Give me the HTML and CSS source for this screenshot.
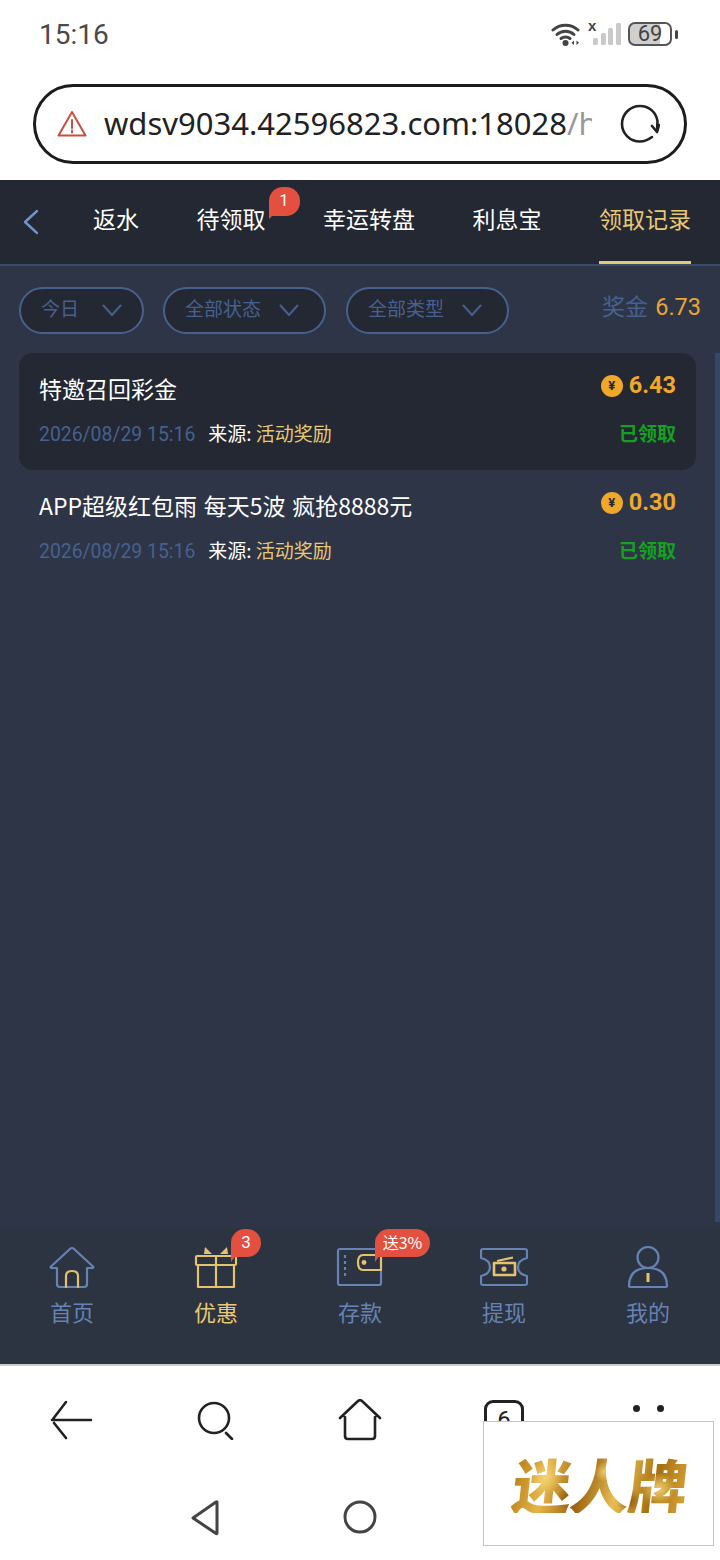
FILE: index.html
```html
<!DOCTYPE html>
<html lang="zh">
<head>
    <meta charset="UTF-8">
    <meta name="viewport" content="width=device-width, initial-scale=1.0">
    <title>领取记录</title>
    <link rel="stylesheet" href="styles.css">
</head>
<body>
    <div class="phone">
        <!-- Status bar -->
        <div class="status-bar">
            <span class="clock">15:16</span>
            <div class="status-icons">
                <svg width="30" height="23" viewBox="0 0 30 23" fill="none" stroke="#444" stroke-width="3" stroke-linecap="round">
                    <path d="M2 7C9 0.500 20 0.500 27 7"/>
                    <path d="M6 11.500C11 7 18 7 23 11.500"/>
                    <path d="M10 15.500C12.500 13.500 16.500 13.500 19 15.500"/>
                    <circle cx="14.500" cy="20" r="3" fill="#444" stroke="none"/>
                    <path d="M23 17.500V22L20.500 19.800ZM25.500 17.500V22L28 19.800Z" fill="#444" stroke="none"/>
                </svg>
                <div class="signal">
                    <span class="signal-x">x</span>
                    <svg width="28" height="22" viewBox="0 0 28 22" fill="#c9c9c9">
                        <rect x="0" y="15" width="5" height="7" rx="1.500"/>
                        <rect x="8" y="10" width="5" height="12" rx="1.500"/>
                        <rect x="15" y="5" width="5" height="17" rx="1.500"/>
                        <rect x="23" y="0" width="5" height="22" rx="1.500"/>
                    </svg>
                </div>
                <div class="battery">
                    <div class="battery-body"><span>69</span></div>
                    <div class="battery-cap"></div>
                </div>
            </div>
        </div>

        <!-- Browser address bar -->
        <div class="url-wrap">
            <div class="url-bar">
                <svg class="url-warn" width="30" height="28" viewBox="0 0 30 28" fill="none" stroke="#c9503f" stroke-width="2" stroke-linejoin="round">
                    <path d="M15 2L28.500 25.500H1.500Z"/>
                    <path d="M15 10v8M15 20.500v2" stroke-linecap="round"/>
                </svg>
                <div class="url-text">wdsv9034.42596823.com:18028<span class="url-path">/h</span></div>
                <svg class="url-reload" width="40" height="40" viewBox="0 0 40 40" fill="none" stroke="#222" stroke-width="2.600" stroke-linecap="round">
                    <path d="M32 33C28 36 24 37.500 20 37.500C10 37.500 2 29.500 2 20C2 10 10 2 20 2C29 2 36 8 37.500 17L37 27"/>
                    <path d="M32 22L37 28L39 21" stroke-linejoin="round"/>
                </svg>
            </div>
        </div>

        <!-- Tabs -->
        <header class="tabs">
            <svg class="back" width="16" height="26" viewBox="0 0 16 26" fill="none" stroke="#6f93cb" stroke-width="2.400" stroke-linecap="round" stroke-linejoin="round">
                <path d="M14 2L2 13L14 24"/>
            </svg>
            <nav class="tab-list">
                <span class="tab">返水</span>
                <span class="tab">待领取<b class="tab-badge"><i>1</i></b></span>
                <span class="tab">幸运转盘</span>
                <span class="tab">利息宝</span>
                <span class="tab tab-active">领取记录</span>
            </nav>
        </header>

        <main class="content">
            <!-- Filters -->
            <div class="filters">
                <div class="pill pill-short">今日
                    <svg width="20" height="12" viewBox="0 0 20 12" fill="none" stroke="#47618f" stroke-width="2"><path d="M1 1L10 11L19 1"/></svg>
                </div>
                <div class="pill">全部状态
                    <svg width="20" height="12" viewBox="0 0 20 12" fill="none" stroke="#47618f" stroke-width="2"><path d="M1 1L10 11L19 1"/></svg>
                </div>
                <div class="pill">全部类型
                    <svg width="20" height="12" viewBox="0 0 20 12" fill="none" stroke="#47618f" stroke-width="2"><path d="M1 1L10 11L19 1"/></svg>
                </div>
                <div class="bonus">奖金 <span>6.73</span></div>
            </div>

            <!-- Records -->
            <div class="record record-dark">
                <div class="record-top">
                    <span class="record-title">特邀召回彩金</span>
                    <span class="amount"><i class="coin">¥</i>6.43</span>
                </div>
                <div class="record-bottom">
                    <span class="date">2026/08/29 15:16</span>
                    <span class="source">来源: <em>活动奖励</em></span>
                    <span class="state">已领取</span>
                </div>
            </div>
            <div class="record">
                <div class="record-top">
                    <span class="record-title">APP超级红包雨 每天5波 疯抢8888元</span>
                    <span class="amount"><i class="coin">¥</i>0.30</span>
                </div>
                <div class="record-bottom">
                    <span class="date">2026/08/29 15:16</span>
                    <span class="source">来源: <em>活动奖励</em></span>
                    <span class="state">已领取</span>
                </div>
            </div>
            <div class="scroll-thumb"></div>
        </main>

        <!-- Site bottom nav -->
        <footer class="site-nav">
            <div class="site-item">
                <svg width="48" height="44" viewBox="0 0 48 44" fill="none" stroke="#6583b3" stroke-width="2.200" stroke-linejoin="round" stroke-linecap="round">
                    <path d="M9 22V38Q9 41 12 41H36Q39 41 39 38V22H44Q46 22 45 20.500L25.500 2.500Q24 1.500 22.500 2.500L3 20.500Q2 22 4 22Z"/>
                    <path d="M18 41V30Q18 25 24 25Q30 25 30 30V41" stroke="#e3c36f"/>
                </svg>
                <span>首页</span>
            </div>
            <div class="site-item site-item-active">
                <div class="site-icon">
                    <svg width="48" height="44" viewBox="0 0 48 44" fill="none" stroke="#e3c36f" stroke-width="2.200" stroke-linejoin="round">
                        <rect x="4" y="10" width="40" height="9" rx="1"/>
                        <path d="M6 19V41H42V19M24 10V41"/>
                        <path d="M13 1L20 8H12Z" fill="#e3c36f" stroke="none"/>
                        <path d="M35 1L28 8H36Z" fill="#e3c36f" stroke="none"/>
                    </svg>
                    <b class="nav-badge">3</b>
                </div>
                <span>优惠</span>
            </div>
            <div class="site-item">
                <div class="site-icon">
                    <svg width="48" height="44" viewBox="0 0 48 44" fill="none" stroke="#6583b3" stroke-width="2.200" stroke-linejoin="round">
                        <path d="M45 9V5Q45 3 43 3H4Q2 3 2 5V37Q2 39 4 39H43Q45 39 45 37V24"/>
                        <path d="M9 9V31" stroke-dasharray="3 3"/>
                        <path d="M45 9H27Q22 9 22 16.500Q22 24 27 24H45Z" stroke="#e3c36f"/>
                        <circle cx="28" cy="16.500" r="2.400" fill="#e3c36f" stroke="none"/>
                    </svg>
                    <b class="nav-badge nav-badge-wide">送3%</b>
                </div>
                <span>存款</span>
            </div>
            <div class="site-item">
                <svg width="48" height="44" viewBox="0 0 48 44" fill="none" stroke="#6583b3" stroke-width="2.200" stroke-linejoin="round">
                    <path d="M3 3H45Q47 3 47 5V12Q38 14 38 21Q38 28 47 30V37Q47 39 45 39H3Q1 39 1 37V30Q10 28 10 21Q10 14 1 12V5Q1 3 3 3Z"/>
                    <rect x="14" y="17" width="21" height="12" stroke="#e3c36f" stroke-width="2.600"/>
                    <path d="M17 15L33 11.500" stroke="#e3c36f"/>
                    <circle cx="24" cy="23" r="2.600" fill="#e3c36f" stroke="none"/>
                </svg>
                <span>提现</span>
            </div>
            <div class="site-item">
                <svg width="48" height="44" viewBox="0 0 48 44" fill="none" stroke="#6583b3" stroke-width="2.200" stroke-linejoin="round">
                    <circle cx="24" cy="11.500" r="10.500"/>
                    <path d="M5 40Q5 22 24 22Q43 22 43 40Q43 41 41 41H7Q5 41 5 40Z"/>
                    <path d="M24 27V36" stroke="#e3c36f" stroke-width="3"/>
                </svg>
                <span>我的</span>
            </div>
        </footer>

        <!-- Browser toolbar -->
        <div class="browser-bar">
            <svg width="44" height="40" viewBox="0 0 44 40" fill="none" stroke="#222" stroke-width="2.600" stroke-linecap="round">
                <path d="M2 20H41M16 2L3 19M4 23L16 38"/>
            </svg>
            <svg width="44" height="40" viewBox="0 0 44 40" fill="none" stroke="#222" stroke-width="2.600" stroke-linecap="round">
                <circle cx="20" cy="18" r="15"/>
                <path d="M32 33L38 39"/>
            </svg>
            <svg width="44" height="42" viewBox="0 0 44 42" fill="none" stroke="#222" stroke-width="2.600" stroke-linecap="round" stroke-linejoin="round">
                <path d="M2 19L20 2Q22 0.500 24 2L42 19M7 18V37Q7 40 10 40H34Q37 40 37 37V18"/>
            </svg>
            <div class="tab-count"><span>6</span></div>
            <div class="more-dots"><i></i><i></i><i></i><i></i></div>
        </div>

        <!-- System nav -->
        <div class="system-bar">
            <svg width="32" height="36" viewBox="0 0 32 36" fill="none" stroke="#444" stroke-width="3" stroke-linejoin="round">
                <path d="M27 2V33Q27 34 26 33.500L3 18L26 2Q27 1.500 27 2Z"/>
            </svg>
            <svg width="34" height="34" viewBox="0 0 34 34" fill="none" stroke="#444" stroke-width="3">
                <circle cx="17" cy="17" r="15"/>
            </svg>
        </div>

        <!-- Watermark over the corner -->
        <div class="watermark"><span>迷人牌</span></div>
    </div>
</body>
</html>
```

FILE: styles.css
```css
* {
    box-sizing: border-box;
}
html, body {
    margin: 0;
    padding: 0;
    background: #fff;
}
body {
    font-family: "Noto Sans CJK SC", "Noto Sans", sans-serif;
}
.phone {
    position: relative;
    width: 720px;
    height: 1560px;
    overflow: hidden;
    display: flex;
    flex-direction: column;
}
i, em {
    font-style: normal;
}

/* status bar */
.status-bar {
    height: 84px;
    flex: none;
    padding: 12px 42px 0 39px;
    display: flex;
    justify-content: space-between;
    align-items: flex-start;
}
.clock {
    margin-top: 1px;
    font-family: Roboto, sans-serif;
    font-size: 28px;
    line-height: 44px;
    color: #4a4a4a;
}
.status-icons {
    display: flex;
    align-items: center;
    gap: 7px;
    height: 44px;
}
.signal {
    position: relative;
    width: 33px;
    height: 22px;
    display: flex;
    justify-content: flex-end;
}
.signal-x {
    position: absolute;
    left: 0;
    top: -4px;
    font: bold 15px/14px "Liberation Sans", sans-serif;
    color: #444;
}
.battery {
    display: flex;
    align-items: center;
    gap: 3px;
}
.battery-body {
    width: 44px;
    height: 24px;
    border: 2px solid #555;
    border-radius: 7px;
    background: linear-gradient(90deg, #cfcfcf 76%, #fff 76%);
    font: 22px/20px Roboto, sans-serif;
    color: #444;
    text-align: center;
}
.battery-cap {
    width: 3px;
    height: 9px;
    background: #444;
    border-radius: 2px;
}

/* address bar */
.url-wrap {
    height: 96px;
    flex: none;
    padding: 0 33px;
}
.url-bar {
    height: 80px;
    border: 3px solid #1c1c1c;
    border-radius: 40px;
    display: flex;
    align-items: center;
    padding-left: 21px;
    padding-right: 24px;
}
.url-warn {
    flex: none;
}
.url-text {
    width: 488px;
    margin: 0 0 2px 17px;
    overflow: hidden;
    white-space: nowrap;
    font-family: "Noto Sans", sans-serif;
    font-size: 31px;
    color: #222;
}
.url-path {
    color: #999;
}
.url-reload {
    flex: none;
    margin-left: auto;
}

/* tabs */
.tabs {
    height: 86px;
    flex: none;
    display: flex;
    background: #232833;
    border-bottom: 2px solid #3a4a68;
}
.back {
    flex: none;
    margin: 29px 0 0 23px;
}
.tab-list {
    display: flex;
    gap: 57.500px;
    margin-left: 54px;
}
.tab {
    position: relative;
    font-size: 23px;
    line-height: 32px;
    padding-top: 22px;
    height: 84px;
    color: #fff;
    white-space: nowrap;
}
.tab-active {
    color: #e7c873;
}
.tab-active::after {
    content: "";
    position: absolute;
    left: 0;
    right: 0;
    bottom: 0;
    height: 3px;
    background: #e7c873;
}
.tab-badge {
    position: absolute;
    left: 72px;
    top: 7px;
    width: 31px;
    height: 29px;
    background: #e4503f;
    border-radius: 14px 14px 14px 0;
    color: #fff;
    font: 400 16px/27px Roboto, sans-serif;
    text-align: center;
}
.tab-badge::after {
    content: "";
    position: absolute;
    left: 0;
    top: 22px;
    border-top: 10px solid #e4503f;
    border-right: 10px solid transparent;
}

/* filters and records */
.content {
    position: relative;
    flex: 1;
    background: #2e3547;
    padding: 21px 24px 0 19px;
}
.filters {
    display: flex;
    align-items: center;
    height: 46px;
    gap: 20px;
    margin-bottom: 20px;
}
.pill {
    width: 163px;
    height: 47px;
    border: 2px solid #47618f;
    border-radius: 24px;
    background: #232833;
    color: #47618f;
    font-size: 19px;
    line-height: 1;
    display: flex;
    align-items: center;
    justify-content: space-between;
    padding: 0 25px 5px 20px;
}
.pill svg {
    margin-top: 5px;
}
.pill-short {
    width: 125px;
    margin-right: -1px;
    padding-right: 20px;
}
.bonus {
    margin-left: auto;
    margin-right: -5px;
    padding-bottom: 10px;
    font-size: 23px;
    color: #47618f;
    white-space: nowrap;
}
.bonus span {
    margin-left: 2px;
    font-family: Roboto, sans-serif;
    font-size: 23.500px;
    color: #eaa532;
}
.record {
    width: 677px;
    height: 117px;
    border-radius: 14px;
    padding: 16px 20px 0 20px;
}
.record-dark {
    background: #232833;
}
.record-top {
    display: flex;
    justify-content: space-between;
    height: 36px;
    margin-bottom: 9px;
}
.record-title {
    font-size: 23px;
    line-height: 38px;
    word-spacing: 1.500px;
    color: #fff;
}
.amount {
    display: flex;
    align-items: flex-start;
    margin-top: 3px;
    font-family: Roboto, sans-serif;
    font-weight: 700;
    font-size: 23.500px;
    line-height: 26px;
    color: #f0a828;
}
.coin {
    width: 22px;
    height: 22px;
    margin: 3px 6px 0 0;
    border-radius: 50%;
    background: #f0a828;
    color: #232833;
    font-size: 13px;
    line-height: 22px;
    text-align: center;
}
.record-bottom {
    display: flex;
    align-items: center;
    height: 36px;
    font-size: 19px;
    line-height: 1;
}
.date {
    padding-top: 6px;
    font-family: Roboto, sans-serif;
    color: #47618f;
    font-size: 19.400px;
}
.source {
    margin-left: 13px;
    color: #fff;
}
.source em {
    color: #e7c873;
}
.state {
    margin-left: auto;
    color: #13a11f;
    font-weight: 700;
}
.scroll-thumb {
    position: absolute;
    right: 0;
    top: 87px;
    bottom: 6px;
    width: 5px;
    background: #364866;
}

/* site nav */
.site-nav {
    height: 138px;
    flex: none;
    background: #2c3341;
    border-bottom: 2px solid #c8cdd2;
    display: grid;
    grid-template-columns: repeat(5, 144px);
    padding-top: 18px;
}
.site-item {
    display: flex;
    flex-direction: column;
    align-items: center;
    color: #6583b3;
    font-size: 22px;
    line-height: 30px;
    gap: 6px;
}
.site-item-active {
    color: #e7c873;
}
.site-icon {
    position: relative;
    width: 48px;
    height: 44px;
}
.nav-badge {
    position: absolute;
    left: 39px;
    top: -17px;
    min-width: 30px;
    height: 28px;
    border-radius: 14px 14px 14px 0;
    background: #e4503f;
    color: #fff;
    font: 400 17px/27px Roboto, sans-serif;
    text-align: center;
    padding: 0 9px;
}
.nav-badge::after {
    content: "";
    position: absolute;
    left: 0;
    top: 22px;
    border-top: 11px solid #e4503f;
    border-right: 8px solid transparent;
}
.nav-badge-wide {
    width: 55px;
    padding: 0;
    font-family: "Noto Sans CJK SC", sans-serif;
    font-size: 16px;
    white-space: nowrap;
}

/* browser toolbar */
.browser-bar {
    height: 96px;
    flex: none;
    display: grid;
    grid-template-columns: repeat(5, 144px);
    justify-items: center;
    align-items: center;
    padding-top: 12px;
}
.tab-count {
    width: 40px;
    height: 40px;
    border: 3px solid #222;
    border-radius: 9px;
    text-align: center;
    font: 24px/34px Roboto, sans-serif;
    color: #222;
}
.more-dots {
    display: grid;
    grid-template-columns: 7px 7px;
    gap: 17px;
}
.more-dots i {
    width: 7px;
    height: 7px;
    border-radius: 50%;
    background: #222;
}

/* system nav */
.system-bar {
    height: 98px;
    flex: none;
    display: grid;
    grid-template-columns: 190px 32px 121px 34px;
    align-items: start;
    padding-top: 38px;
}
.system-bar svg:first-child {
    grid-column: 2;
}
.system-bar svg:nth-child(2) {
    grid-column: 4;
}

/* watermark */
.watermark {
    position: absolute;
    left: 483px;
    top: 1421px;
    width: 231px;
    height: 125px;
    background: #fff;
    border: 1px solid #c4c4c4;
    display: flex;
    align-items: center;
    justify-content: center;
}
.watermark span {
    margin-left: 4px;
    font-size: 59px;
    font-weight: 900;
    line-height: 1;
    letter-spacing: -1px;
    transform: skewX(-6deg);
    background:
        radial-gradient(circle at 18% 40%, #f3d374 0, transparent 12%),
        radial-gradient(circle at 52% 30%, #f0cb66 0, transparent 10%),
        radial-gradient(circle at 84% 60%, #f2d271 0, transparent 11%),
        radial-gradient(circle at 33% 75%, #8f5a0c 0, transparent 10%),
        radial-gradient(circle at 68% 80%, #8f5a0c 0, transparent 9%),
        linear-gradient(100deg, #b87a14, #e6b64a 20%, #9c6510 40%, #e8be55 60%, #a8700f 80%, #d9a53a);
    -webkit-background-clip: text;
    background-clip: text;
    color: transparent;
}
```
